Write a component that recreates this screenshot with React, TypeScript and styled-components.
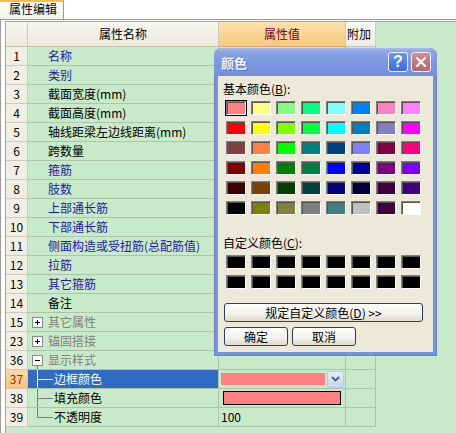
import React from "react";
import styled, { createGlobalStyle, css } from "styled-components";

const GlobalStyle = createGlobalStyle`
  html, body { margin: 0; padding: 0; background: #fff; }
  body {
    font-family: "Noto Sans CJK SC", "Liberation Sans", sans-serif;
    font-size: 12px;
    color: #000;
  }
  * { box-sizing: border-box; }
`;

type Tone = "blue" | "black" | "gray";
type RowKind = "plain" | "group" | "child";
interface RowData {
  n: number;
  label: string;
  kind: RowKind;
  tone?: Tone;
  open?: boolean;
  last?: boolean;
  selected?: boolean;
  value?: "bar" | "box" | string;
}

const ROWS: RowData[] = [
  { n: 1, label: "名称", kind: "plain", tone: "blue" },
  { n: 2, label: "类别", kind: "plain", tone: "blue" },
  { n: 3, label: "截面宽度(mm)", kind: "plain", tone: "black" },
  { n: 4, label: "截面高度(mm)", kind: "plain", tone: "black" },
  { n: 5, label: "轴线距梁左边线距离(mm)", kind: "plain", tone: "black" },
  { n: 6, label: "跨数量", kind: "plain", tone: "black" },
  { n: 7, label: "箍筋", kind: "plain", tone: "blue" },
  { n: 8, label: "肢数", kind: "plain", tone: "blue" },
  { n: 9, label: "上部通长筋", kind: "plain", tone: "blue" },
  { n: 10, label: "下部通长筋", kind: "plain", tone: "blue" },
  { n: 11, label: "侧面构造或受扭筋(总配筋值)", kind: "plain", tone: "blue" },
  { n: 12, label: "拉筋", kind: "plain", tone: "blue" },
  { n: 13, label: "其它箍筋", kind: "plain", tone: "blue" },
  { n: 14, label: "备注", kind: "plain", tone: "black" },
  { n: 15, label: "其它属性", kind: "group", tone: "gray" },
  { n: 23, label: "锚固搭接", kind: "group", tone: "gray" },
  { n: 36, label: "显示样式", kind: "group", tone: "gray", open: true },
  { n: 37, label: "边框颜色", kind: "child", selected: true, value: "bar" },
  { n: 38, label: "填充颜色", kind: "child", tone: "black", value: "box" },
  { n: 39, label: "不透明度", kind: "child", tone: "black", last: true, value: "100" },
];

const BASIC = [
  ["#FF8080", "#FFFF80", "#80FF80", "#00FF80", "#80FFFF", "#0080FF", "#FF80C0", "#FF80FF"],
  ["#FF0000", "#FFFF00", "#80FF00", "#00FF40", "#00FFFF", "#0080C0", "#8080C0", "#FF00FF"],
  ["#804040", "#FF8040", "#00FF00", "#008080", "#004080", "#8080FF", "#800040", "#FF0080"],
  ["#800000", "#FF8000", "#008000", "#008040", "#0000FF", "#0000A0", "#800080", "#8000FF"],
  ["#400000", "#804000", "#004000", "#004040", "#000080", "#000040", "#400040", "#400080"],
  ["#000000", "#808000", "#808040", "#808080", "#408080", "#C0C0C0", "#400040", "#FFFFFF"],
];

const GREEN = "#c8eac8";
const GRID_LINE = "#abc5ab";
const NUM_LINE = "#cdcabb";
const TREE = "#7c7c7c";

const Page = styled.div`
  width: 456px;
  height: 433px;
  position: relative;
  overflow: hidden;
  background: #fff;
  display: flex;
  flex-direction: column;
`;

const TabStrip = styled.div`
  height: 20px;
  border-bottom: 1px solid #919b9c;
  display: flex;
  align-items: flex-start;
`;

const Tab = styled.div`
  width: 64px;
  height: 19px;
  border-top: 2px solid #f8bd4a;
  border-right: 1px solid #919b9c;
  background: linear-gradient(#fffefb, #f3f2ec);
  padding-left: 9px;
  line-height: 14px;
  white-space: nowrap;
`;

const Panel = styled.div`
  flex: 1;
  min-height: 0;
  display: flex;
  border-left: 1px solid #9a9a9a;
  padding: 1px 0 0 4px;
`;

const Grid = styled.div`
  flex: 1;
  border-left: 1px solid #a3a3a3;
  border-top: 1px solid #a3a3a3;
  background: ${GREEN};
  display: grid;
  grid-template-columns: 22px 191px 127px 30px 1fr;
  grid-template-rows: 25px;
  grid-auto-rows: 19px;
  align-content: start;
`;

const HeadNum = styled.div`
  background: linear-gradient(#f8f7f1, #ece9da);
  border-right: 1px solid ${NUM_LINE};
  border-bottom: 1px solid #c6c1aa;
`;

const HeadCell = styled.div<{ $variant: "name" | "value" | "extra" }>`
  line-height: 24px;
  white-space: nowrap;
  border-right: 1px solid ${NUM_LINE};
  border-bottom: 1px solid #c6c1aa;
  ${(p) =>
    p.$variant === "name" &&
    css`
      text-align: center;
      background: linear-gradient(#f8f7f1, #ece9da);
    `}
  ${(p) =>
    p.$variant === "value" &&
    css`
      text-align: center;
      color: #7a0026;
      background: linear-gradient(#fde3ad, #f6c67e);
      border-bottom-color: #e0a860;
    `}
  ${(p) =>
    p.$variant === "extra" &&
    css`
      padding-left: 1px;
      background: linear-gradient(#fbfbf7, #efede3);
    `}
`;

const Filler = styled.div`
  background: ${GREEN};
`;

const NumCell = styled.div<{ $selected?: boolean }>`
  text-align: center;
  line-height: 18px;
  border-right: 1px solid ${NUM_LINE};
  border-bottom: 1px solid ${NUM_LINE};
  background: ${(p) => (p.$selected ? "linear-gradient(#fddba3, #f6c27c)" : "#f1efe3")};
  color: ${(p) => (p.$selected ? "#9a2d00" : "#000")};
`;

const NameCell = styled.div<{ $selected?: boolean; $indent: number; $stem?: boolean }>`
  display: flex;
  align-items: center;
  padding-left: ${(p) => p.$indent}px;
  white-space: nowrap;
  overflow: hidden;
  border-right: 1px solid ${GRID_LINE};
  border-bottom: 1px solid ${GRID_LINE};
  background: ${(p) =>
    p.$selected
      ? "#316ac5"
      : p.$stem
      ? `linear-gradient(${TREE}, ${TREE}) 9px 100% / 1px 50% no-repeat, ${GREEN}`
      : GREEN};
`;

const Label = styled.span<{ $tone: Tone; $selected?: boolean }>`
  line-height: 18px;
  color: ${(p) =>
    p.$selected ? "#fff" : p.$tone === "blue" ? "#1a1aa6" : p.$tone === "gray" ? "#808080" : "#000"};
`;

const Connector = styled.span<{ $last?: boolean; $selected?: boolean }>`
  width: 16px;
  align-self: stretch;
  flex: none;
  margin-right: 1px;
  ${(p) => {
    const c = p.$selected ? "#ffffff" : TREE;
    return css`
      background: linear-gradient(${c}, ${c}) 0 0 / 1px ${p.$last ? "50%" : "100%"} no-repeat,
        linear-gradient(${c}, ${c}) 0 50% / 100% 1px no-repeat;
    `;
  }}
`;

const ToggleBox = styled.svg`
  flex: none;
  width: 11px;
  height: 11px;
  margin-right: 5px;
`;

const ValueCell = styled.div<{ $pad: number }>`
  display: flex;
  align-items: center;
  gap: 2px;
  padding-left: ${(p) => p.$pad}px;
  line-height: 18px;
  border-right: 1px solid ${GRID_LINE};
  border-bottom: 1px solid ${GRID_LINE};
`;

const ExtraCell = styled.div`
  border-right: 1px solid ${GRID_LINE};
  border-bottom: 1px solid ${GRID_LINE};
`;

const ColorBar = styled.div`
  width: 104px;
  height: 12px;
  background: #ff8080;
`;

const ColorBox = styled.div`
  width: 118px;
  height: 14px;
  background: #ff8080;
  border: 1px solid #000;
`;

const DropButton = styled.div`
  width: 17px;
  height: 17px;
  border: 1px solid #b7c8ef;
  border-radius: 2px;
  background: linear-gradient(#e3ebfd, #c3d3f8);
  display: flex;
  align-items: center;
  justify-content: center;
`;

/* ---------- dialog ---------- */

const Dialog = styled.div`
  position: absolute;
  left: 214px;
  top: 48px;
  width: 223px;
  height: 308px;
  background: #7893dc;
  border-radius: 8px 8px 0 0;
  padding: 0 4px 4px 4px;
  display: flex;
  flex-direction: column;
  box-shadow: inset 0 0 0 1px #6580cc;
`;

const TitleBar = styled.div`
  height: 28px;
  margin: 0 -4px;
  padding: 0 6px 0 7px;
  border-radius: 8px 8px 0 0;
  background: linear-gradient(#a9bdf0 0, #8ea7e8 3px, #7d98e1 45%, #7591dd 100%);
  display: flex;
  align-items: center;
  gap: 3px;
`;

const TitleText = styled.span`
  flex: 1;
  font-weight: bold;
  font-size: 13px;
  color: #f2f5ff;
  text-shadow: 1px 1px 0 #5a74c4;
`;

const CaptionButton = styled.div<{ $kind: "help" | "close" }>`
  width: 20px;
  height: 20px;
  border: 1px solid #eef2fd;
  border-radius: 3px;
  display: flex;
  align-items: center;
  justify-content: center;
  color: #fff;
  font-family: "Liberation Sans", sans-serif;
  font-weight: bold;
  font-size: 16px;
  background: ${(p) =>
    p.$kind === "help"
      ? "linear-gradient(#6b96f4, #3d6de0)"
      : "linear-gradient(#d48c8c, #b96666)"};
`;

const Body = styled.div`
  flex: 1;
  background: #ece9d8;
  padding: 6px 10px 0 5px;
  display: flex;
  flex-direction: column;
`;

const DlgLabel = styled.div<{ $gap: number }>`
  line-height: 14px;
  margin-top: ${(p) => p.$gap}px;
  white-space: nowrap;
`;

const SwatchGrid = styled.div`
  margin: 4px 0 0 2px;
  display: grid;
  grid-template-columns: repeat(8, 22px);
  grid-auto-rows: 16px;
  column-gap: 3px;
  row-gap: 4px;
`;

const SwatchCell = styled.div<{ $selected?: boolean }>`
  border: 1px solid ${(p) => (p.$selected ? "#000" : "transparent")};
`;

const Swatch = styled.div`
  width: 100%;
  height: 100%;
  border: 1px solid;
  border-color: #808080 #ffffff #ffffff #808080;
  box-shadow: inset 1px 1px 0 #555;
`;

const DlgButton = styled.button<{ $w: number; $gap: number }>`
  width: ${(p) => p.$w}px;
  height: 19px;
  margin: ${(p) => p.$gap}px 0 0 1px;
  padding: 0;
  border: 1px solid #2a3f63;
  border-radius: 3px;
  background: linear-gradient(#ffffff, #f3f2ec 55%, #dedbcf);
  font: inherit;
  font-size: 12px;
  line-height: 17px;
  color: #000;
  white-space: nowrap;
`;

const ButtonRow = styled.div`
  display: flex;
  gap: 4px;
  margin-top: 5px;
  margin-left: 1px;
  & > button {
    margin: 0;
  }
`;

function Toggle({ open }: { open?: boolean }) {
  return (
    <ToggleBox viewBox="0 0 11 11">
      <rect x="0.5" y="0.5" width="10" height="10" fill="#fff" stroke="#8a8a8a" />
      <line x1="3" y1="5.5" x2="8" y2="5.5" stroke="#000" />
      {!open && <line x1="5.5" y1="3" x2="5.5" y2="8" stroke="#000" />}
    </ToggleBox>
  );
}

function Row({ r }: { r: RowData }) {
  let name: React.ReactNode;
  if (r.kind === "plain") {
    name = (
      <NameCell $indent={20}>
        <Label $tone={r.tone || "black"}>{r.label}</Label>
      </NameCell>
    );
  } else if (r.kind === "group") {
    name = (
      <NameCell $indent={4} $stem={r.open}>
        <Toggle open={r.open} />
        <Label $tone="gray">{r.label}</Label>
      </NameCell>
    );
  } else {
    name = (
      <NameCell $indent={9} $selected={r.selected}>
        <Connector $last={r.last} $selected={r.selected} />
        <Label $tone={r.tone || "black"} $selected={r.selected}>
          {r.label}
        </Label>
      </NameCell>
    );
  }

  let value: React.ReactNode = <ValueCell $pad={2} />;
  if (r.value === "bar") {
    value = (
      <ValueCell $pad={2}>
        <ColorBar />
        <DropButton>
          <svg width="9" height="6" viewBox="0 0 9 6">
            <path d="M1 1 L4.5 4.5 L8 1" fill="none" stroke="#4a5d86" strokeWidth="1.8" />
          </svg>
        </DropButton>
      </ValueCell>
    );
  } else if (r.value === "box") {
    value = (
      <ValueCell $pad={4}>
        <ColorBox />
      </ValueCell>
    );
  } else if (r.value) {
    value = <ValueCell $pad={2}>{r.value}</ValueCell>;
  }

  return (
    <>
      <NumCell $selected={r.selected}>{r.n}</NumCell>
      {name}
      {value}
      <ExtraCell />
      <Filler />
    </>
  );
}

function ColorDialog() {
  return (
    <Dialog>
      <TitleBar>
        <TitleText>颜色</TitleText>
        <CaptionButton $kind="help">?</CaptionButton>
        <CaptionButton $kind="close">
          <svg width="12" height="12" viewBox="0 0 12 12">
            <path d="M2 2 L10 10 M10 2 L2 10" stroke="#fff" strokeWidth="2.2" strokeLinecap="round" />
          </svg>
        </CaptionButton>
      </TitleBar>
      <Body>
        <DlgLabel $gap={0}>
          基本颜色(<u>B</u>):
        </DlgLabel>
        <SwatchGrid>
          {BASIC.flatMap((row, ri) =>
            row.map((c, ci) => (
              <SwatchCell key={`${ri}-${ci}`} $selected={ri === 0 && ci === 0}>
                <Swatch style={{ background: c }} />
              </SwatchCell>
            ))
          )}
        </SwatchGrid>
        <DlgLabel $gap={20}>
          自定义颜色(<u>C</u>):
        </DlgLabel>
        <SwatchGrid>
          {Array.from({ length: 16 }).map((_, i) => (
            <SwatchCell key={i}>
              <Swatch style={{ background: "#000" }} />
            </SwatchCell>
          ))}
        </SwatchGrid>
        <DlgButton $w={199} $gap={13}>
          规定自定义颜色(<u>D</u>) &gt;&gt;
        </DlgButton>
        <ButtonRow>
          <DlgButton $w={64} $gap={0}>
            确定
          </DlgButton>
          <DlgButton $w={64} $gap={0}>
            取消
          </DlgButton>
        </ButtonRow>
      </Body>
    </Dialog>
  );
}

export default function App() {
  return (
    <>
      <GlobalStyle />
      <Page>
        <TabStrip>
          <Tab>属性编辑</Tab>
        </TabStrip>
        <Panel>
          <Grid>
            <HeadNum />
            <HeadCell $variant="name">属性名称</HeadCell>
            <HeadCell $variant="value">属性值</HeadCell>
            <HeadCell $variant="extra">附加</HeadCell>
            <Filler />
            {ROWS.map((r) => (
              <Row key={r.n} r={r} />
            ))}
          </Grid>
        </Panel>
        <ColorDialog />
      </Page>
    </>
  );
}
